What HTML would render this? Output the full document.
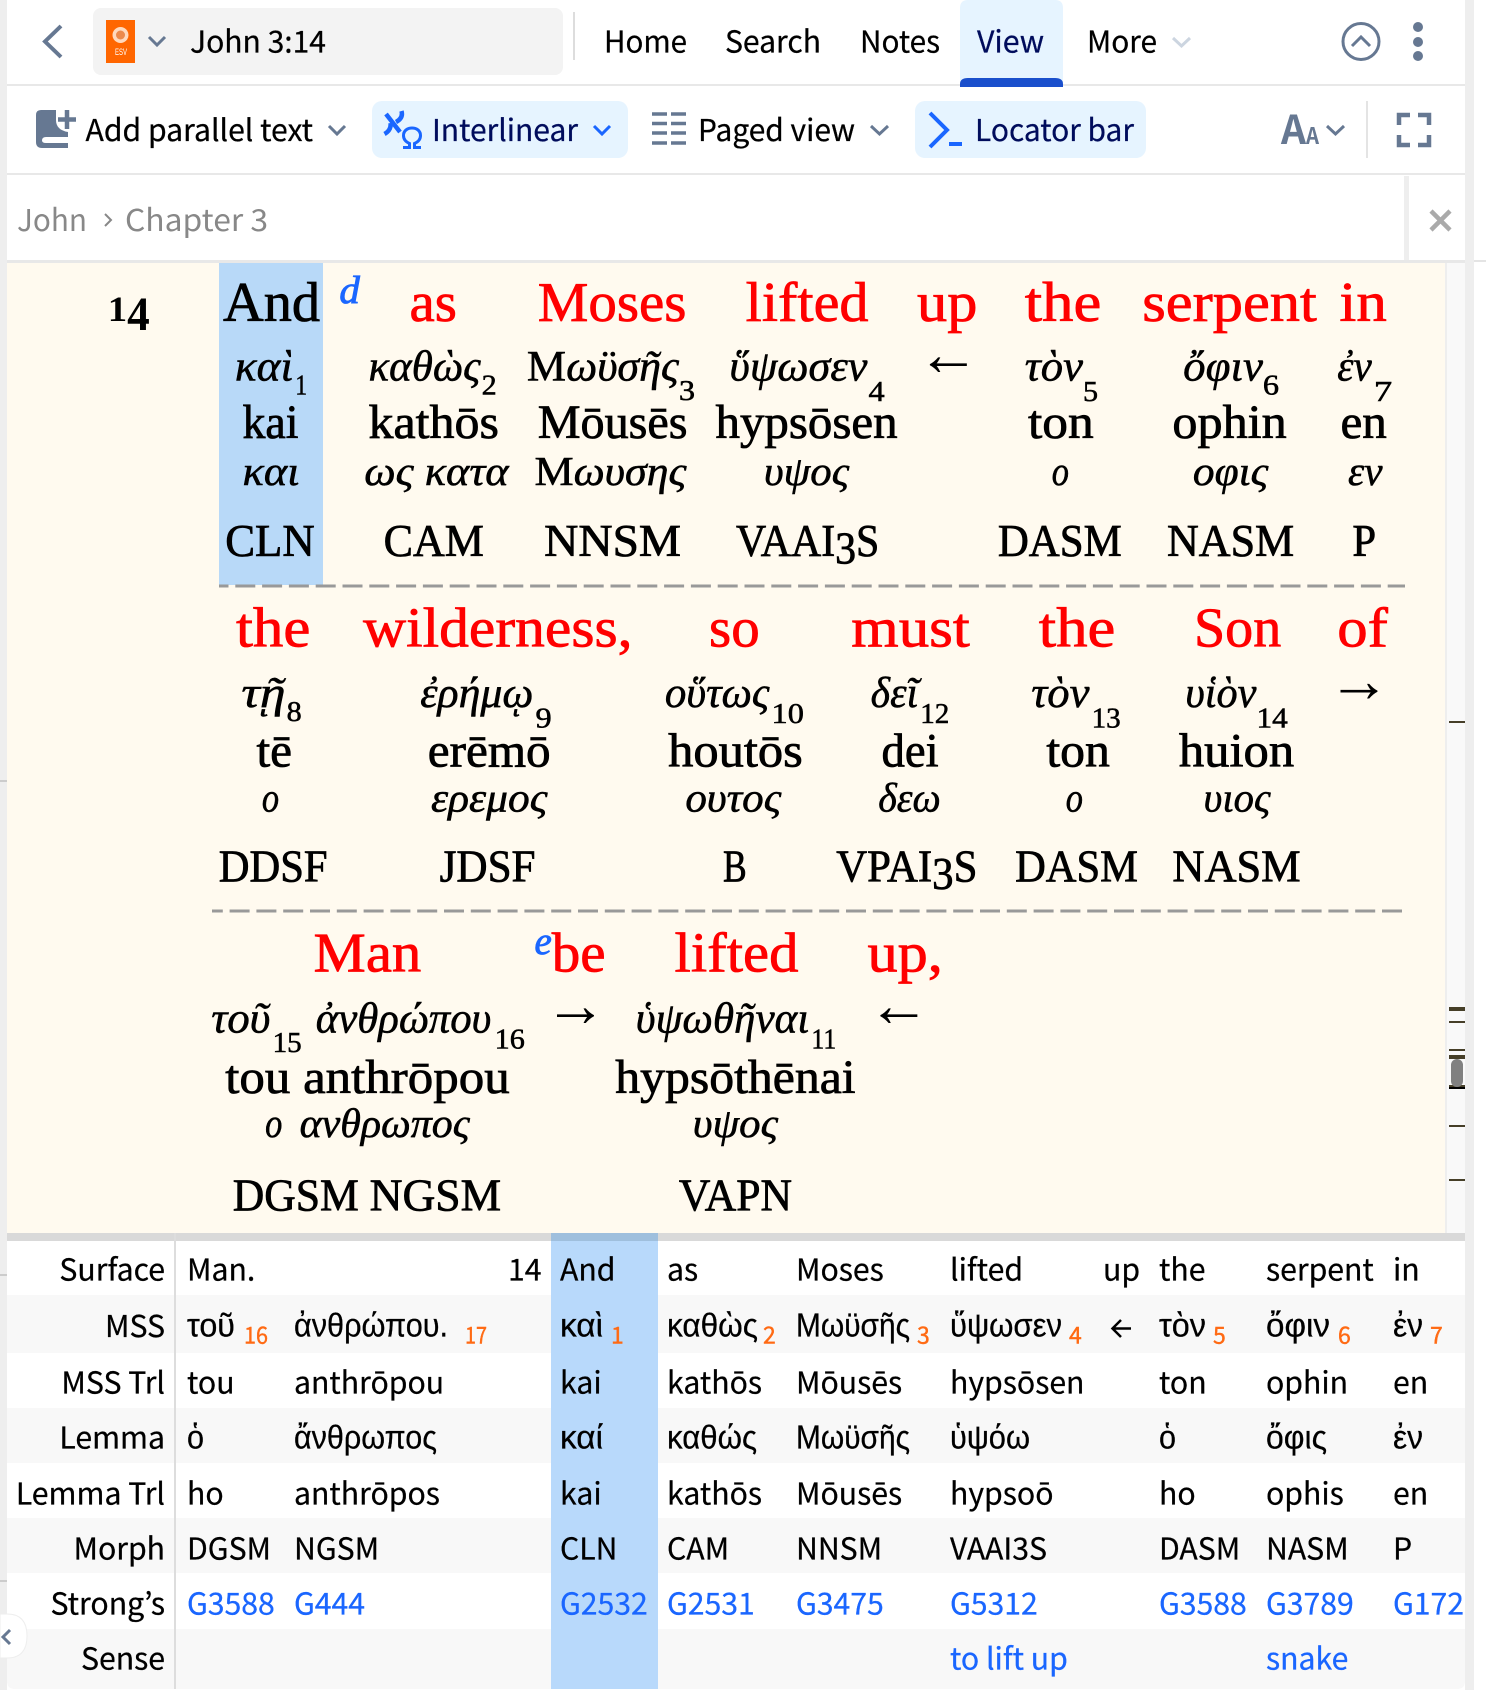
<!DOCTYPE html>
<html><head><meta charset="utf-8"><style>
html,body{margin:0;padding:0;background:#fff;width:1486px;height:1690px;overflow:hidden}
svg{display:block}
.u{font-family:"Noto Sans CJK JP","Liberation Sans",sans-serif;font-size:30.2px;fill:#000;stroke:#000;stroke-width:.25px}
.g{font-family:"Liberation Sans","DejaVu Sans",sans-serif;font-size:33px;fill:#000;stroke:#000;stroke-width:.25px}
.b{fill:#1a66ff;stroke:#1a66ff}
.n{fill:#000c5c;stroke:#000c5c}
.c{fill:#888;stroke:none}
.o{font-family:"Noto Sans CJK JP",sans-serif;font-size:23px;fill:#ff6a13;stroke:#ff6a13;stroke-width:.4px}
.e{font-family:"Liberation Serif",serif;font-size:52px;fill:#f00;stroke:#f00;stroke-width:.7px}
.k{fill:#000;stroke:#000}
.x{font-family:"Liberation Serif",serif;font-style:italic;font-size:40px;fill:#000;stroke:#000;stroke-width:.5px}
.s{font-family:"Liberation Serif",serif;font-size:26px;fill:#000;stroke:#000;stroke-width:.5px}
.t{font-family:"Liberation Serif",serif;font-size:44px;fill:#000;stroke:#000;stroke-width:.7px}
.l{font-family:"Liberation Serif",serif;font-style:italic;font-size:38px;fill:#000;stroke:#000;stroke-width:.5px}
.m{font-family:"Liberation Serif",serif;font-size:42px;fill:#000;stroke:#000;stroke-width:.7px}
.a{font-family:"Liberation Serif",serif;font-size:58px;fill:#000}
.d{font-family:"Liberation Serif",serif;font-style:italic;font-size:36px;fill:#1a66ff;stroke:#1a66ff;stroke-width:.8px}
.r{text-anchor:end}
.up{font-style:normal}
</style></head><body>
<svg width="1486" height="1690" viewBox="0 0 1486 1690" xmlns="http://www.w3.org/2000/svg">
<!-- frame -->
<rect x="0" y="0" width="1486" height="1690" fill="#fff"/>
<rect x="0" y="0" width="7" height="1690" fill="#eee"/>
<rect x="1465" y="0" width="9" height="1690" fill="#eee"/>
<rect x="0" y="780" width="7" height="2" fill="#ccc"/>
<rect x="0" y="1274" width="7" height="2" fill="#ccc"/>
<rect x="0" y="1580" width="7" height="2" fill="#ccc"/>
<rect x="1474" y="260" width="12" height="2" fill="#e4e4e4"/>
<rect x="7" y="0" width="1458" height="1689" rx="8" fill="#fff"/>

<!-- top bar -->
<path d="M61 26L45 41.500L61 57" fill="none" stroke="#667892" stroke-width="4"/>
<rect x="93" y="8" width="470" height="67" rx="8" fill="#f3f3f3"/>
<rect x="106" y="20" width="29" height="43" fill="#ff6600"/>
<circle cx="120.500" cy="35" r="8" fill="#ffd9bd"/>
<circle cx="120.500" cy="35" r="4.500" fill="#ec8a4c"/>
<text x="115" y="55" font-size="9" fill="#fff" font-family="Liberation Sans,sans-serif" textLength="12" lengthAdjust="spacingAndGlyphs">ESV</text>
<path d="M149 37L157 45L165 37" fill="none" stroke="#667892" stroke-width="3"/>
<text class="u" x="190" y="52.500" textLength="136" lengthAdjust="spacingAndGlyphs">John 3:14</text>
<rect x="573" y="12" width="2" height="48" fill="#ddd"/>
<text class="u" x="604" y="52.500" textLength="83" lengthAdjust="spacingAndGlyphs">Home</text>
<text class="u" x="725" y="52.500" textLength="96" lengthAdjust="spacingAndGlyphs">Search</text>
<text class="u" x="860" y="52.500" textLength="80" lengthAdjust="spacingAndGlyphs">Notes</text>
<path d="M960 87V8Q960 0 968 0H1055Q1063 0 1063 8V87Z" fill="#e6f4ff"/>
<path d="M960 87V84Q960 78 968 78H1055Q1063 78 1063 84V87Z" fill="#1a4fcc"/>
<text class="u n" x="977" y="52.500" textLength="67" lengthAdjust="spacingAndGlyphs">View</text>
<text class="u" x="1087" y="52.500" textLength="70" lengthAdjust="spacingAndGlyphs">More</text>
<path d="M1173 38L1181.500 46L1190 38" fill="none" stroke="#ccd5e0" stroke-width="3"/>
<circle cx="1361" cy="41.500" r="18" fill="none" stroke="#667892" stroke-width="3"/>
<path d="M1352 46L1361 37L1370 46" fill="none" stroke="#667892" stroke-width="3"/>
<circle cx="1418" cy="27" r="5" fill="#667892"/><circle cx="1418" cy="42" r="5" fill="#667892"/><circle cx="1418" cy="56" r="5" fill="#667892"/>
<rect x="7" y="84" width="953" height="2" fill="#e8e8e8"/><rect x="1063" y="84" width="402" height="2" fill="#e8e8e8"/>

<!-- toolbar -->
<path d="M36 115Q36 110 41 110H56V120Q56 130 68 132V137H46Q42 137 42 140.500Q42 143 46 143H68V148H42Q36 148 36 142Z" fill="#667892"/>
<path d="M67 110V129M58 119.500H76" stroke="#667892" stroke-width="4.500" fill="none"/>
<text class="u" x="85.500" y="141" textLength="227.500" lengthAdjust="spacingAndGlyphs">Add parallel text</text>
<path d="M329 126L337 134L345 126" fill="none" stroke="#667892" stroke-width="3"/>
<rect x="372" y="101" width="256" height="57" rx="10" fill="#e6f4ff"/>
<path d="M386 114L400 132M401.500 111Q403.500 118 396 122M390.500 123Q391.500 130 384.500 134" fill="none" stroke="#1a66ff" stroke-width="4.500"/>
<path d="M403 147.500H409.500V143.500C405 141.500 403.500 138.500 403.500 135.500C403.500 131 407 128 412 128C417 128 420.500 131 420.500 135.500C420.500 138.500 419 141.500 414.500 143.500V147.500H421" fill="none" stroke="#1a66ff" stroke-width="3"/>
<text class="u n" x="432" y="141" textLength="146" lengthAdjust="spacingAndGlyphs">Interlinear</text>
<path d="M594 126L602 134L610 126" fill="none" stroke="#1a66ff" stroke-width="3"/>
<path d="M652 114H667M671 114H686M652 123.500H667M671 123.500H686M652 133H667M671 133H686M652 143H667M671 143H686" stroke="#667892" stroke-width="3.500" fill="none"/>
<text class="u" x="698" y="141" textLength="157" lengthAdjust="spacingAndGlyphs">Paged view</text>
<path d="M871 126L879.500 134L888 126" fill="none" stroke="#667892" stroke-width="3"/>
<rect x="915" y="101" width="231" height="57" rx="10" fill="#e6f4ff"/>
<path d="M930 113L947 130L930 147" fill="none" stroke="#1a66ff" stroke-width="4"/>
<rect x="949" y="142" width="13" height="4" fill="#1a66ff"/>
<text class="u n" x="975" y="141" textLength="159" lengthAdjust="spacingAndGlyphs">Locator bar</text>
<text x="1281" y="144" font-family="Noto Sans CJK JP,sans-serif" font-weight="bold" font-size="40" fill="#667892" textLength="25" lengthAdjust="spacingAndGlyphs">A</text>
<text x="1306" y="144" font-family="Noto Sans CJK JP,sans-serif" font-weight="bold" font-size="23" fill="#667892" textLength="13" lengthAdjust="spacingAndGlyphs">A</text>
<path d="M1327 126L1335.500 134L1344 126" fill="none" stroke="#667892" stroke-width="3"/>
<rect x="1366" y="101" width="2" height="57" fill="#e4e4e4"/>
<path d="M1399 125V115H1410M1418 115H1429V125M1429 135V145H1418M1410 145H1399V135" fill="none" stroke="#667892" stroke-width="4.500"/>
<rect x="7" y="173" width="1458" height="2" fill="#e8e8e8"/>

<!-- breadcrumb -->
<text class="u c" x="17" y="231" textLength="70" lengthAdjust="spacingAndGlyphs">John</text>
<path d="M105 214L111 220L105 226" fill="none" stroke="#888" stroke-width="2"/>
<text class="u c" x="125" y="231" textLength="143" lengthAdjust="spacingAndGlyphs">Chapter 3</text>
<rect x="1404" y="176" width="5" height="84" fill="#eee"/>
<path d="M1431 211L1450 230M1450 211L1431 230" stroke="#aaa" stroke-width="4.500" fill="none"/>
<rect x="7" y="260" width="1458" height="3" fill="#e8e8e8"/>

<!-- reader -->
<rect x="7" y="263" width="1438" height="970" fill="#fffaef"/>
<rect x="1445" y="263" width="2" height="970" fill="#eee"/>
<rect x="1447" y="263" width="18" height="970" fill="#f9f9f9"/>
<g fill="#463f28">
<rect x="1449" y="721" width="16" height="2"/>
<rect x="1449" y="1007" width="16" height="4"/>
<rect x="1449" y="1021" width="16" height="2"/>
<rect x="1449" y="1049" width="16" height="2"/>
<rect x="1449" y="1055" width="16" height="4"/>
<rect x="1449" y="1125" width="16" height="2"/>
<rect x="1449" y="1179" width="16" height="2"/>
<rect x="1449" y="1085" width="16" height="2"/>
</g>
<rect x="1449" y="1087" width="16" height="2" fill="#000"/>
<rect x="1451" y="1059" width="12" height="28" rx="6" fill="#808080"/>

<rect x="219" y="263" width="104" height="322" fill="#b8d9f8"/>
<path d="M219 586H1405" stroke="#999" stroke-width="3" stroke-dasharray="20 6.800" stroke-dashoffset="10.500" fill="none"/>
<path d="M212 911H1402" stroke="#999" stroke-width="3" stroke-dasharray="20 6.800" stroke-dashoffset="9.200" fill="none"/>

<g transform="scale(1.07759 1.0778)">
<text x="100" y="298" font-family="Liberation Serif,serif" font-weight="bold" font-size="33" textLength="18" lengthAdjust="spacingAndGlyphs">1</text><text x="118" y="306" font-family="Liberation Serif,serif" font-weight="bold" font-size="44" textLength="21" lengthAdjust="spacingAndGlyphs">4</text>
<!-- row 1 -->
<text class="e k" x="207" y="298" textLength="90" lengthAdjust="spacingAndGlyphs">And</text>
<text class="d" x="315" y="281" textLength="19" lengthAdjust="spacingAndGlyphs">d</text>
<text class="e" x="380" y="298" textLength="44" lengthAdjust="spacingAndGlyphs">as</text>
<text class="e" x="499" y="298" textLength="138" lengthAdjust="spacingAndGlyphs">Moses</text>
<text class="e" x="692" y="298" textLength="114" lengthAdjust="spacingAndGlyphs">lifted</text>
<text class="e" x="851" y="298" textLength="56" lengthAdjust="spacingAndGlyphs">up</text>
<text class="e" x="951" y="298" textLength="71" lengthAdjust="spacingAndGlyphs">the</text>
<text class="e" x="1060" y="298" textLength="162" lengthAdjust="spacingAndGlyphs">serpent</text>
<text class="e" x="1243" y="298" textLength="44" lengthAdjust="spacingAndGlyphs">in</text>

<text class="x" x="218" y="353" textLength="54" lengthAdjust="spacingAndGlyphs">καὶ</text><text class="s" x="274" y="366" textLength="11" lengthAdjust="spacingAndGlyphs">1</text>
<text class="x" x="342" y="353" textLength="104" lengthAdjust="spacingAndGlyphs">καθὼς</text><text class="s" x="447" y="366" textLength="14" lengthAdjust="spacingAndGlyphs">2</text>
<text class="x" x="489" y="353" textLength="141" lengthAdjust="spacingAndGlyphs"><tspan class="up">Μ</tspan>ωϋσῆς</text><text class="s" x="630" y="371" textLength="15" lengthAdjust="spacingAndGlyphs">3</text>
<text class="x" x="677" y="353" textLength="128" lengthAdjust="spacingAndGlyphs">ὕψωσεν</text><text class="s" x="806" y="372" textLength="15" lengthAdjust="spacingAndGlyphs">4</text>
<text class="a" x="851" y="348">←</text>
<text class="x" x="951" y="353" textLength="54" lengthAdjust="spacingAndGlyphs">τὸν</text><text class="s" x="1005" y="372" textLength="14" lengthAdjust="spacingAndGlyphs">5</text>
<text class="x" x="1098" y="353" textLength="74" lengthAdjust="spacingAndGlyphs">ὄφιν</text><text class="s" x="1172" y="366" textLength="15" lengthAdjust="spacingAndGlyphs">6</text>
<text class="x" x="1241" y="353" textLength="32" lengthAdjust="spacingAndGlyphs">ἐν</text><text class="s" x="1275" y="372" textLength="17" lengthAdjust="spacingAndGlyphs">7</text>

<text class="t" x="225" y="406.500" textLength="52" lengthAdjust="spacingAndGlyphs">kai</text>
<text class="t" x="342" y="406.500" textLength="121" lengthAdjust="spacingAndGlyphs">kathōs</text>
<text class="t" x="499" y="406.500" textLength="139" lengthAdjust="spacingAndGlyphs">Mōusēs</text>
<text class="t" x="664" y="406.500" textLength="169" lengthAdjust="spacingAndGlyphs">hypsōsen</text>
<text class="t" x="954" y="406.500" textLength="61" lengthAdjust="spacingAndGlyphs">ton</text>
<text class="t" x="1088" y="406.500" textLength="106" lengthAdjust="spacingAndGlyphs">ophin</text>
<text class="t" x="1244" y="406.500" textLength="43" lengthAdjust="spacingAndGlyphs">en</text>

<text class="l" x="225" y="450" textLength="53" lengthAdjust="spacingAndGlyphs">και</text>
<text class="l" x="338" y="450" textLength="134" lengthAdjust="spacingAndGlyphs">ως κατα</text>
<text class="l" x="496" y="450" textLength="141" lengthAdjust="spacingAndGlyphs"><tspan class="up">Μ</tspan>ωυσης</text>
<text class="l" x="709" y="450" textLength="79" lengthAdjust="spacingAndGlyphs">υψος</text>
<text class="l" x="976" y="450" textLength="16" lengthAdjust="spacingAndGlyphs">ο</text>
<text class="l" x="1107" y="450" textLength="70" lengthAdjust="spacingAndGlyphs">οφις</text>
<text class="l" x="1251" y="450" textLength="32" lengthAdjust="spacingAndGlyphs">εν</text>

<text class="m" x="209" y="516" textLength="83" lengthAdjust="spacingAndGlyphs">CLN</text>
<text class="m" x="356" y="516" textLength="93" lengthAdjust="spacingAndGlyphs">CAM</text>
<text class="m" x="505" y="516" textLength="127" lengthAdjust="spacingAndGlyphs">NNSM</text>
<text class="m" x="683" y="516" textLength="133" lengthAdjust="spacingAndGlyphs">VAAI<tspan dy="7">3</tspan><tspan dy="-7">S</tspan></text>
<text class="m" x="926" y="516" textLength="115" lengthAdjust="spacingAndGlyphs">DASM</text>
<text class="m" x="1083" y="516" textLength="118" lengthAdjust="spacingAndGlyphs">NASM</text>
<text class="m" x="1255" y="516" textLength="22" lengthAdjust="spacingAndGlyphs">P</text>

<!-- row 2 -->
<text class="e" x="219" y="600" textLength="69" lengthAdjust="spacingAndGlyphs">the</text>
<text class="e" x="337" y="600" textLength="250" lengthAdjust="spacingAndGlyphs">wilderness,</text>
<text class="e" x="658" y="600" textLength="47" lengthAdjust="spacingAndGlyphs">so</text>
<text class="e" x="790" y="600" textLength="110" lengthAdjust="spacingAndGlyphs">must</text>
<text class="e" x="964" y="600" textLength="71" lengthAdjust="spacingAndGlyphs">the</text>
<text class="e" x="1108" y="600" textLength="81" lengthAdjust="spacingAndGlyphs">Son</text>
<text class="e" x="1241" y="600" textLength="47" lengthAdjust="spacingAndGlyphs">of</text>

<text class="x" x="224" y="656" textLength="41" lengthAdjust="spacingAndGlyphs">τῇ</text><text class="s" x="266" y="669" textLength="14" lengthAdjust="spacingAndGlyphs">8</text>
<text class="x" x="390" y="656" textLength="105" lengthAdjust="spacingAndGlyphs">ἐρήμῳ</text><text class="s" x="497" y="675" textLength="15" lengthAdjust="spacingAndGlyphs">9</text>
<text class="x" x="617" y="656" textLength="97" lengthAdjust="spacingAndGlyphs">οὕτως</text><text class="s" x="716" y="671" textLength="30" lengthAdjust="spacingAndGlyphs">10</text>
<text class="x" x="808" y="656" textLength="44" lengthAdjust="spacingAndGlyphs">δεῖ</text><text class="s" x="854" y="671" textLength="27" lengthAdjust="spacingAndGlyphs">12</text>
<text class="x" x="957" y="656" textLength="54" lengthAdjust="spacingAndGlyphs">τὸν</text><text class="s" x="1013" y="675" textLength="27" lengthAdjust="spacingAndGlyphs">13</text>
<text class="x" x="1100" y="656" textLength="66" lengthAdjust="spacingAndGlyphs">υἱὸν</text><text class="s" x="1166" y="675" textLength="29" lengthAdjust="spacingAndGlyphs">14</text>
<text class="a" x="1232" y="651">→</text>

<text class="t" x="238" y="711" textLength="33" lengthAdjust="spacingAndGlyphs">tē</text>
<text class="t" x="397" y="711" textLength="114" lengthAdjust="spacingAndGlyphs">erēmō</text>
<text class="t" x="620" y="711" textLength="125" lengthAdjust="spacingAndGlyphs">houtōs</text>
<text class="t" x="818" y="711" textLength="53" lengthAdjust="spacingAndGlyphs">dei</text>
<text class="t" x="971" y="711" textLength="59" lengthAdjust="spacingAndGlyphs">ton</text>
<text class="t" x="1094" y="711" textLength="107" lengthAdjust="spacingAndGlyphs">huion</text>

<text class="l" x="243" y="753" textLength="16" lengthAdjust="spacingAndGlyphs">ο</text>
<text class="l" x="400" y="753" textLength="108" lengthAdjust="spacingAndGlyphs">ερεμος</text>
<text class="l" x="636" y="753" textLength="89" lengthAdjust="spacingAndGlyphs">ουτος</text>
<text class="l" x="815" y="753" textLength="58" lengthAdjust="spacingAndGlyphs">δεω</text>
<text class="l" x="989" y="753" textLength="16" lengthAdjust="spacingAndGlyphs">ο</text>
<text class="l" x="1117" y="753" textLength="62" lengthAdjust="spacingAndGlyphs">υιος</text>

<text class="m" x="203" y="818" textLength="101" lengthAdjust="spacingAndGlyphs">DDSF</text>
<text class="m" x="408" y="818" textLength="89" lengthAdjust="spacingAndGlyphs">JDSF</text>
<text class="m" x="671" y="818" textLength="22" lengthAdjust="spacingAndGlyphs">B</text>
<text class="m" x="776" y="818" textLength="131" lengthAdjust="spacingAndGlyphs">VPAI<tspan dy="7">3</tspan><tspan dy="-7">S</tspan></text>
<text class="m" x="942" y="818" textLength="114" lengthAdjust="spacingAndGlyphs">DASM</text>
<text class="m" x="1088" y="818" textLength="119" lengthAdjust="spacingAndGlyphs">NASM</text>

<!-- row 3 -->
<text class="e" x="291" y="901.500" textLength="100" lengthAdjust="spacingAndGlyphs">Man</text>
<text class="d" x="496" y="885" textLength="16" lengthAdjust="spacingAndGlyphs">e</text>
<text class="e" x="512" y="901.500" textLength="50" lengthAdjust="spacingAndGlyphs">be</text>
<text class="e" x="626" y="901.500" textLength="115" lengthAdjust="spacingAndGlyphs">lifted</text>
<text class="e" x="805" y="901.500" textLength="70" lengthAdjust="spacingAndGlyphs">up,</text>

<text class="x" x="196" y="958" textLength="55" lengthAdjust="spacingAndGlyphs">τοῦ</text><text class="s" x="253" y="976" textLength="27" lengthAdjust="spacingAndGlyphs">15</text>
<text class="x" x="293" y="958" textLength="163" lengthAdjust="spacingAndGlyphs">ἀνθρώπου</text><text class="s" x="459" y="973" textLength="28" lengthAdjust="spacingAndGlyphs">16</text>
<text class="a" x="505" y="952">→</text>
<text class="x" x="590" y="958" textLength="161" lengthAdjust="spacingAndGlyphs">ὑψωθῆναι</text><text class="s" x="753" y="973" textLength="23" lengthAdjust="spacingAndGlyphs">11</text>
<text class="a" x="805" y="952">←</text>

<text class="t" x="209" y="1014" textLength="264" lengthAdjust="spacingAndGlyphs">tou anthrōpou</text>
<text class="t" x="571" y="1014" textLength="223" lengthAdjust="spacingAndGlyphs">hypsōthēnai</text>

<text class="l" x="246" y="1055" textLength="16" lengthAdjust="spacingAndGlyphs">ο</text>
<text class="l" x="278" y="1055" textLength="158" lengthAdjust="spacingAndGlyphs">ανθρωπος</text>
<text class="l" x="643" y="1055" textLength="79" lengthAdjust="spacingAndGlyphs">υψος</text>

<text class="m" x="216" y="1123" textLength="117" lengthAdjust="spacingAndGlyphs">DGSM</text>
<text class="m" x="343" y="1123" textLength="122" lengthAdjust="spacingAndGlyphs">NGSM</text>
<text class="m" x="630" y="1123" textLength="105" lengthAdjust="spacingAndGlyphs">VAPN</text>
</g>

<!-- table -->
<rect x="7" y="1233" width="1458" height="8" fill="#d9d9d9"/>
<rect x="7" y="1295" width="1458" height="58" fill="#f8f8f8"/>
<rect x="7" y="1408" width="1458" height="55" fill="#f8f8f8"/>
<rect x="7" y="1518" width="1458" height="55" fill="#f8f8f8"/>
<path d="M7 1629H1465V1681Q1465 1689 1457 1689H15Q7 1689 7 1681Z" fill="#f8f8f8"/>
<rect x="174" y="1233" width="2" height="456" fill="#ddd"/>
<rect x="551" y="1241" width="107" height="448" fill="#b8d9fb"/>
<rect x="551" y="1233" width="107" height="8" fill="#9fbfdd"/>

<g transform="translate(-1 .5)">
<text class="u r" x="166" y="1280">Surface</text>
<text class="u r" x="166" y="1336.500">MSS</text>
<text class="u r" x="166" y="1393">MSS Trl</text>
<text class="u r" x="166" y="1448">Lemma</text>
<text class="u r" x="166" y="1504">Lemma Trl</text>
<text class="u r" x="166" y="1559">Morph</text>
<text class="u r" x="166" y="1614">Strong’s</text>
<text class="u r" x="166" y="1669">Sense</text>

<text class="u" x="188" y="1280">Man.</text><text class="u" x="509" y="1280">14</text>
<text class="u" x="561" y="1280">And</text><text class="u" x="668" y="1280">as</text>
<text class="u" x="797" y="1280">Moses</text><text class="u" x="951" y="1280">lifted</text>
<text class="u" x="1104" y="1280">up</text><text class="u" x="1160" y="1280">the</text>
<text class="u" x="1267" y="1280">serpent</text><text class="u" x="1394" y="1280">in</text>

<text class="g" x="188" y="1336" textLength="48" lengthAdjust="spacingAndGlyphs">τοῦ</text><text class="o" x="245" y="1343" textLength="24" lengthAdjust="spacingAndGlyphs">16</text>
<text class="g" x="295" y="1336" textLength="154" lengthAdjust="spacingAndGlyphs">ἀνθρώπου.</text><text class="o" x="466" y="1343" textLength="22" lengthAdjust="spacingAndGlyphs">17</text>
<text class="g" x="561" y="1336" textLength="43" lengthAdjust="spacingAndGlyphs">καὶ</text><text class="o" x="612" y="1343">1</text>
<text class="g" x="668" y="1336" textLength="91" lengthAdjust="spacingAndGlyphs">καθὼς</text><text class="o" x="764" y="1343">2</text>
<text class="g" x="797" y="1336" textLength="114" lengthAdjust="spacingAndGlyphs">Μωϋσῆς</text><text class="o" x="918" y="1343">3</text>
<text class="g" x="951" y="1336" textLength="112" lengthAdjust="spacingAndGlyphs">ὕψωσεν</text><text class="o" x="1070" y="1343">4</text>
<path d="M1132 1328H1114M1122 1319.500L1113.500 1328L1122 1336.500" fill="none" stroke="#000" stroke-width="2.500"/>
<text class="g" x="1160" y="1336" textLength="47" lengthAdjust="spacingAndGlyphs">τὸν</text><text class="o" x="1214" y="1343">5</text>
<text class="g" x="1267" y="1336" textLength="64" lengthAdjust="spacingAndGlyphs">ὄφιν</text><text class="o" x="1339" y="1343">6</text>
<text class="g" x="1394" y="1336" textLength="30" lengthAdjust="spacingAndGlyphs">ἐν</text><text class="o" x="1431" y="1343">7</text>

<text class="u" x="188" y="1393">tou</text><text class="u" x="295" y="1393">anthrōpou</text>
<text class="u" x="561" y="1393">kai</text><text class="u" x="668" y="1393">kathōs</text>
<text class="u" x="797" y="1393">Mōusēs</text><text class="u" x="951" y="1393">hypsōsen</text>
<text class="u" x="1160" y="1393">ton</text><text class="u" x="1267" y="1393">ophin</text><text class="u" x="1394" y="1393">en</text>

<text class="g" x="188" y="1448" textLength="17" lengthAdjust="spacingAndGlyphs">ὁ</text>
<text class="g" x="295" y="1448" textLength="143" lengthAdjust="spacingAndGlyphs">ἄνθρωπος</text>
<text class="g" x="561" y="1448" textLength="43" lengthAdjust="spacingAndGlyphs">καί</text>
<text class="g" x="668" y="1448" textLength="90" lengthAdjust="spacingAndGlyphs">καθώς</text>
<text class="g" x="797" y="1448" textLength="114" lengthAdjust="spacingAndGlyphs">Μωϋσῆς</text>
<text class="g" x="951" y="1448" textLength="80" lengthAdjust="spacingAndGlyphs">ὑψόω</text>
<text class="g" x="1160" y="1448" textLength="17" lengthAdjust="spacingAndGlyphs">ὁ</text>
<text class="g" x="1267" y="1448" textLength="61" lengthAdjust="spacingAndGlyphs">ὄφις</text>
<text class="g" x="1394" y="1448" textLength="30" lengthAdjust="spacingAndGlyphs">ἐν</text>

<text class="u" x="188" y="1504">ho</text><text class="u" x="295" y="1504">anthrōpos</text>
<text class="u" x="561" y="1504">kai</text><text class="u" x="668" y="1504">kathōs</text>
<text class="u" x="797" y="1504">Mōusēs</text><text class="u" x="951" y="1504">hypsoō</text>
<text class="u" x="1160" y="1504">ho</text><text class="u" x="1267" y="1504">ophis</text><text class="u" x="1394" y="1504">en</text>

<text class="u" x="188" y="1559">DGSM</text><text class="u" x="295" y="1559">NGSM</text>
<text class="u" x="561" y="1559">CLN</text><text class="u" x="668" y="1559">CAM</text>
<text class="u" x="797" y="1559">NNSM</text><text class="u" x="951" y="1559">VAAI3S</text>
<text class="u" x="1160" y="1559">DASM</text><text class="u" x="1267" y="1559">NASM</text><text class="u" x="1394" y="1559">P</text>

<text class="u b" x="188" y="1614">G3588</text><text class="u b" x="295" y="1614">G444</text>
<text class="u b" x="561" y="1614">G2532</text><text class="u b" x="668" y="1614">G2531</text>
<text class="u b" x="797" y="1614">G3475</text><text class="u b" x="951" y="1614">G5312</text>
<text class="u b" x="1160" y="1614">G3588</text><text class="u b" x="1267" y="1614">G3789</text><text class="u b" x="1394" y="1614">G172</text>

<text class="u b" x="951" y="1669">to lift up</text><text class="u b" x="1267" y="1669">snake</text>
</g>

<!-- side button -->
<path d="M0 1614H7Q27 1614 27 1636Q27 1658 7 1658H0Z" fill="#fff" stroke="#eee" stroke-width="1"/>
<path d="M10 1630L3 1637L10 1644" fill="none" stroke="#667892" stroke-width="3"/>
</svg>
</body></html>
